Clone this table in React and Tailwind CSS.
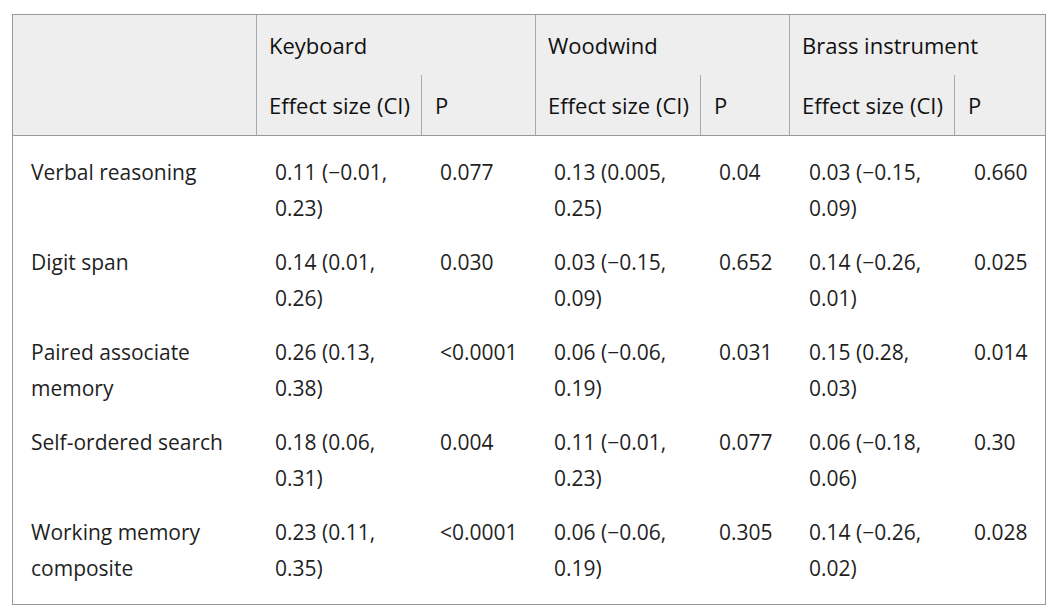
const groups = [
    { name: 'Keyboard', pw: 'w-[114px]' },
    { name: 'Woodwind', pw: 'w-[89px]' },
    { name: 'Brass instrument', pw: 'w-[89px]' },
];

const rows = [
    ['Verbal reasoning', '0.11 (−0.01, 0.23)', '0.077', '0.13 (0.005, 0.25)', '0.04', '0.03 (−0.15, 0.09)', '0.660'],
    ['Digit span', '0.14 (0.01, 0.26)', '0.030', '0.03 (−0.15, 0.09)', '0.652', '0.14 (−0.26, 0.01)', '0.025'],
    ['Paired associate memory', '0.26 (0.13, 0.38)', '<0.0001', '0.06 (−0.06, 0.19)', '0.031', '0.15 (0.28, 0.03)', '0.014'],
    ['Self-ordered search', '0.18 (0.06, 0.31)', '0.004', '0.11 (−0.01, 0.23)', '0.077', '0.06 (−0.18, 0.06)', '0.30'],
    ['Working memory composite', '0.23 (0.11, 0.35)', '<0.0001', '0.06 (−0.06, 0.19)', '0.305', '0.14 (−0.26, 0.02)', '0.028'],
];

export default function App() {
    return (
        <div className="min-h-screen bg-white pt-[14px] pl-[12px] text-[21px] leading-[36px] text-[#1f1f1f]" style={{ fontFamily: '"Open Sans", "Noto Sans", sans-serif' }}>
            <div className="w-[1034px] border border-[#999]">
                {/* header */}
                <div className="flex bg-[#eee] border-b border-[#999] text-[22px] text-[#111]">
                    <div className="w-[243px] h-[120px]" />
                    {groups.map(g => (
                        <div key={g.name} className="flex flex-col border-l border-[#aaa]">
                            <div className="h-[60px] flex items-center pl-[12px] whitespace-nowrap">{g.name}</div>
                            <div className="flex h-[60px]">
                                <div className="w-[164px] flex items-center pl-[12px] whitespace-nowrap">Effect size (CI)</div>
                                <div className={`${g.pw} border-l border-[#aaa] flex items-center pl-[13px]`}>P</div>
                            </div>
                        </div>
                    ))}
                </div>
                {/* body */}
                <div className="py-[9px]">
                    {rows.map(r => (
                        <div key={r[0]} className="grid grid-cols-[243px_165px_114px_165px_90px_165px_90px] py-[9px]">
                            {r.map((cell, i) => (
                                <div key={i} className={i === 0 ? 'pl-[18px] pr-[18px]' : i % 2 === 1 ? 'pl-[19px] pr-[18px]' : 'pl-[19px] pr-[2px]'}>{cell}</div>
                            ))}
                        </div>
                    ))}
                </div>
            </div>
        </div>
    );
}
